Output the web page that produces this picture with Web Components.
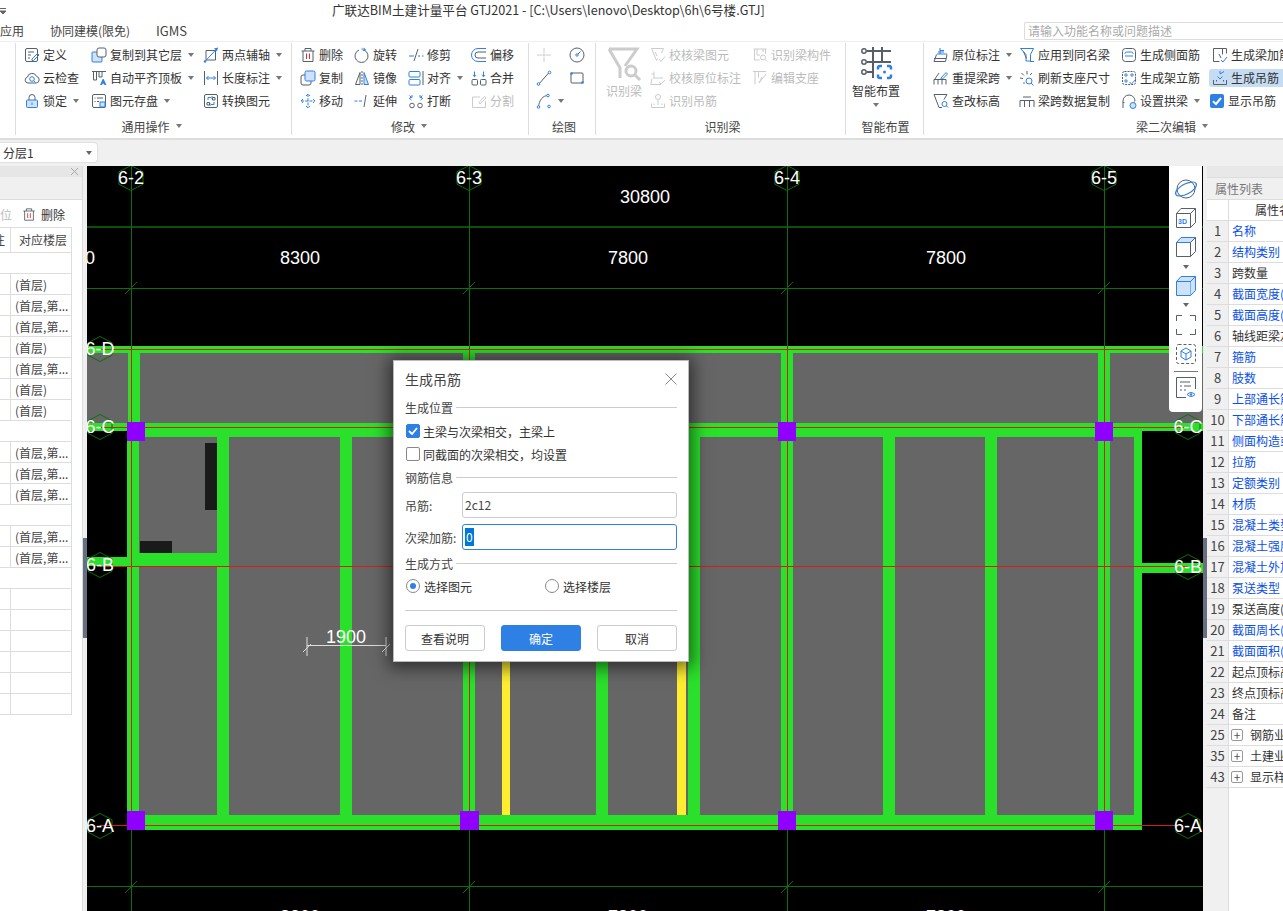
<!DOCTYPE html>
<html lang="zh">
<head>
<meta charset="utf-8">
<title>GTJ2021</title>
<style>
  html, body { margin: 0; height: 100%; overflow: hidden; background: #fff; }
  body { font: 12px "Noto Sans CJK SC", "Liberation Sans", sans-serif; color: #333; }
  .row { display: flex; }
  .col { display: flex; flex-direction: column; }
</style>
</head>
<body>
<gtj-app>
  <gtj-titlebar slot="top">广联达BIM土建计量平台 GTJ2021 - [C:\Users\lenovo\Desktop\6h\6号楼.GTJ]</gtj-titlebar>
  <gtj-tabs slot="top"></gtj-tabs>
  <gtj-ribbon slot="top">
    <rb-group style="width:16px"></rb-group>
    <rb-group label="通用操作" arrow style="width:276px;--pad:8px;--lp:0px;--rp:4px">
      <div class="col" style="width:67px">
        <rb-item icon="define">定义</rb-item><rb-item icon="cloud">云检查</rb-item><rb-item icon="lock" arrow>锁定</rb-item>
      </div>
      <div class="col" style="width:112px">
        <rb-item icon="copyfloor" arrow>复制到其它层</rb-item><rb-item icon="flush" arrow>自动平齐顶板</rb-item><rb-item icon="save" arrow>图元存盘</rb-item>
      </div>
      <div class="col">
        <rb-item icon="axis" arrow>两点辅轴</rb-item><rb-item icon="dim" arrow>长度标注</rb-item><rb-item icon="convert">转换图元</rb-item>
      </div>
    </rb-group>
    <rb-group label="修改" arrow style="width:237px;--pad:8px;--rp:2px">
      <div class="col" style="width:54px">
        <rb-item icon="trash">删除</rb-item><rb-item icon="copy">复制</rb-item><rb-item icon="move">移动</rb-item>
      </div>
      <div class="col" style="width:54px">
        <rb-item icon="rotate">旋转</rb-item><rb-item icon="mirror">镜像</rb-item><rb-item icon="extend">延伸</rb-item>
      </div>
      <div class="col" style="width:63px">
        <rb-item icon="trim">修剪</rb-item><rb-item icon="align" arrow>对齐</rb-item><rb-item icon="break">打断</rb-item>
      </div>
      <div class="col">
        <rb-item icon="offset">偏移</rb-item><rb-item icon="merge">合并</rb-item><rb-item icon="split" disabled>分割</rb-item>
      </div>
    </rb-group>
    <rb-group label="绘图" style="width:67px;--pad:7px;--lp:4px">
      <div class="col" style="width:33px">
        <rb-item icon="point" disabled></rb-item><rb-item icon="line"></rb-item><rb-item icon="arc" arrow></rb-item>
      </div>
      <div class="col">
        <rb-item icon="circle"></rb-item><rb-item icon="rect"></rb-item>
      </div>
    </rb-group>
    <rb-group label="识别梁" style="width:250px;--pad:10px;--lp:4px">
      <div class="col" style="width:44px"><rb-big icon="recog" disabled>识别梁</rb-big></div>
      <div class="col" style="width:102px">
        <rb-item icon="chkbeam" disabled>校核梁图元</rb-item><rb-item icon="chkmark" disabled>校核原位标注</rb-item><rb-item icon="hanger" disabled>识别吊筋</rb-item>
      </div>
      <div class="col">
        <rb-item icon="beamdef" disabled>识别梁构件</rb-item><rb-item icon="support" disabled>编辑支座</rb-item>
      </div>
    </rb-group>
    <rb-group label="智能布置" style="width:78px;--pad:7px;--lp:2px">
      <rb-big icon="smart" arrow>智能布置</rb-big>
    </rb-group>
    <rb-group label="梁二次编辑" arrow style="width:500px;--pad:9px;--rp:3px">
      <div class="col" style="width:86px">
        <rb-item icon="inplace" arrow>原位标注</rb-item><rb-item icon="respan" arrow>重提梁跨</rb-item><rb-item icon="elev">查改标高</rb-item>
      </div>
      <div class="col" style="width:102px">
        <rb-item icon="applysame">应用到同名梁</rb-item><rb-item icon="refresh">刷新支座尺寸</rb-item><rb-item icon="spancopy">梁跨数据复制</rb-item>
      </div>
      <div class="col" style="width:91px">
        <rb-item icon="side">生成侧面筋</rb-item><rb-item icon="erect">生成架立筋</rb-item><rb-item icon="arch" arrow>设置拱梁</rb-item>
      </div>
      <div class="col">
        <rb-item icon="addbar">生成梁加筋</rb-item><rb-item icon="hangblue" active>生成吊筋</rb-item><rb-item icon="check" style="margin-left:-3px">显示吊筋</rb-item>
      </div>
    </rb-group>
  </gtj-ribbon>
  <gtj-subbar slot="top">分层1</gtj-subbar>
  <gtj-floorpanel slot="left"></gtj-floorpanel>
  <gtj-canvas slot="center"><gtj-viewbar></gtj-viewbar></gtj-canvas>
  <gtj-props slot="right"></gtj-props>
  <gtj-dialog slot="over" heading="生成吊筋"></gtj-dialog>
</gtj-app>

<script>
const ICONS = {
  define: '<rect class="g" x="1.5" y="1.5" width="12" height="13" rx="1.5"/><path class="g" d="M4 5h6M4 8h3M4 11h2"/><path class="b" d="M8 12l5.5-5.5 1.5 1.5-5.5 5.5H8z"/>',
  cloud: '<path class="g" d="M4 13a3 3 0 0 1-.6-5.9A4.8 4.8 0 0 1 12.6 6.5 3.3 3.3 0 0 1 12.2 13z"/><circle class="b" cx="8" cy="9" r="2.3"/><path class="b" d="M9.7 10.7l1.6 1.6"/>',
  lock: '<path class="g" d="M5 7V4.5a3 3 0 0 1 6 0V7"/><rect class="f" x="2.5" y="7" width="11" height="7.5" rx="1"/><path class="b" d="M8 9.5v2.5"/>',
  copyfloor: '<rect class="f" x="1" y="5" width="10" height="10" rx="1"/><rect class="w" x="6" y="1" width="9" height="9" rx="2"/>',
  flush: '<path class="g" d="M1 1.5h14M2.5 1.5V10h3V1.5M8 1.5V7h3V1.5"/><path class="fb" d="M9 15l2.7-6h1l2.7 6h-2l-.4-1.2h-1.6l-.4 1.2z"/>',
  save: '<rect class="g" x="1.5" y="1.5" width="13" height="13" rx="1.5"/><path class="g" d="M6 5h6M3.5 5h1M3.5 8.500h1M6 8.500h2"/><rect class="f" x="9" y="9" width="5" height="5"/>',
  axis: '<path class="g" d="M3 3.500h9.500V13H3z"/><path class="b" d="M1.500 15L14 1.500"/><path class="fb" d="M11 1.500l4-1-1 4z"/><circle class="fb" cx="2" cy="14.500" r="1.200"/>',
  dim: '<path class="g" d="M1.500 1v14M14.500 1v14"/><path class="b" d="M3.500 8h9M5.500 6l-2 2 2 2M10.500 6l2 2-2 2"/>',
  convert: '<rect class="g" x="1.500" y="1.500" width="13" height="13" rx="1.500"/><path class="b" d="M8 4.500h-3v2.500M8 4.500l1.500-1.500M8 4.500l1.500 1.500M8 11.500h3V9M8 11.500l-1.500-1.500M8 11.500l-1.500 1.500"/><path class="g" d="M4 9.500h2.500V12H4zM9.500 4.500H12V7H9.500z"/>',
  trash: '<path class="g" d="M1.500 4h13M5 4V1.500h6V4M3 4v10.500h10V4"/><path class="r" d="M6.500 6.500v5.500M9.500 6.500v5.500"/>',
  copy: '<rect class="w" x="1" y="5" width="10" height="10" rx="2"/><rect class="f" x="5" y="1" width="10" height="10" rx="1.500"/>',
  move: '<path class="b" d="M8 1v14M1 8h14M6 3l2-2 2 2M6 13l2 2 2-2M3 6L1 8l2 2M13 6l2 2-2 2" stroke-dasharray="3 1.200"/>',
  rotate: '<path class="g" d="M5 3a6.500 6.500 0 1 0 5 0" /><path class="b" d="M7.500 2a5 5 0 0 1 3.500 1M9.500 .8l2 2-2.500 1"/>',
  mirror: '<path class="g" d="M1.500 14.500L6 2.500V14.500z"/><path class="f" d="M14.500 14.500L10 2.500V14.500z"/><path class="g" d="M8 1v14" stroke-dasharray="2 1"/>',
  extend: '<path class="b" d="M.5 8h8" stroke-dasharray="3 1.500"/><path class="g" d="M12 2L10 14"/>',
  trim: '<path class="b" d="M1 9h5M10 9h2M14 9h1.500"/><path class="g" d="M10 2L6 14"/>',
  align: '<rect class="b" x="1" y="1.500" width="11" height="5.500" rx="1"/><rect class="b" x="1" y="9.500" width="11" height="5.500" rx="1"/><path class="g" d="M15 1v14"/>',
  break: '<circle class="g" cx="4" cy="12.500" r="2.300"/><circle class="g" cx="12" cy="12.500" r="2.300"/><path class="b" d="M1 5l2.500 2M1.500 2.500l2 2M4 2v2.500h-2M15 5l-2.500 2M14.500 2.500l-2 2M12 2v2.500h2"/>',
  offset: '<path class="b" d="M15 1.500H7a6.500 6.500 0 0 0 0 13h8"/><path class="g" d="M15 5H7a3 3 0 0 0 0 6h8"/>',
  merge: '<rect class="g" x="1" y="9.500" width="5.500" height="5.500" rx="1"/><rect class="g" x="9.500" y="9.500" width="5.500" height="5.500" rx="1"/><path class="b" d="M3.500 1.500v5M1.800 5l1.700 1.700L5.200 5M12.500 1.500v5M10.800 5l1.700 1.700L14.200 5"/>',
  split: '<path class="g" d="M9 4H1.500v10.500h13V8M9 11l6-6-1.500-1.500-5.500 6z"/>',
  point: '<path class="g" d="M8 1v5M8 10v5M1 8h5M10 8h5"/><circle class="g" cx="8" cy="8" r="1"/>',
  line: '<path class="g" d="M2.500 14.500L13.500 2"/><circle class="wb" cx="2.500" cy="14" r="1.300"/><circle class="wb" cx="13.500" cy="2.500" r="1.300"/>',
  arc: '<path class="g" d="M2.500 14C3 7 7 2.500 12 2.500"/><circle class="wb" cx="2.500" cy="14" r="1.300"/><circle class="wb" cx="12" cy="2.500" r="1.300"/><circle class="wb" cx="13" cy="13.500" r="1.300"/>',
  circle: '<circle class="g" cx="8" cy="8" r="7"/><path class="g" d="M8 8l3.500-3.500"/><circle class="wb" cx="8" cy="8" r="1.200"/>',
  rect: '<rect class="g" x="2" y="3" width="12" height="10" rx="1"/><circle class="fb" cx="2.500" cy="3.500" r="1.300"/><circle class="fb" cx="13.500" cy="12.500" r="1.300"/>',
  chkbeam: '<path class="g" d="M1.500 1.500h12l-2 4.500M1.500 1.500l5 12 1-2M5 5l2 4"/><path class="g" d="M9 12l2 2.500 4-5"/>',
  chkmark: '<path class="g" d="M4 8V1.500M1.500 4H4M3 8h10M2 8.500L.8 14.500H11"/><path class="g" d="M9 12l2 2 4-4"/>',
  hanger: '<circle class="g" cx="8" cy="4" r="2.500"/><path class="g" d="M8 6.500V12M1.500 10.500v4h13v-4M4 10.500V12M12 10.500V12"/>',
  beamdef: '<path class="g" d="M1.500 2h13M2.500 2v11h5M13.500 2v5M5 2v6h3M11 2v3"/><circle class="g" cx="11" cy="10.500" r="2.500"/><path class="g" d="M13 12.500l2 2"/>',
  support: '<path class="g" d="M1 1.500h13M3 1.500v13M6.500 1.500v6M10 7l-3 6 7-9"/>',
  inplace: '<path class="b" d="M7 7V1M7 3.500h4M4 7h10M5 5l6 0"/><path class="g" d="M3.500 7.500L1 14.500h11.500l1.500-7M1 11.500h12"/>',
  respan: '<path class="b" d="M8 8l5-5.500 1.500 1.500L9.500 9H8z"/><path class="g" d="M1 14.500V9.500h12v5M5 9.500v5M9 9.500v5M1.500 9.500L6 3"/>',
  elev: '<path class="g" d="M1 1.500h13l-3 5M1 1.500l5 13h3"/><circle class="b" cx="11.500" cy="11" r="2.500"/><path class="b" d="M13.300 12.800l1.700 1.700"/>',
  applysame: '<path class="b" d="M1.500 1.500h13l-3 6v6.500H7V7.500z"/><path class="g" d="M4.500 4.500l3 7"/><path class="b" d="M11 14.500h4"/>',
  refresh: '<path class="g" d="M1 8l3 .5M2.500 3l2.500 2.500M8 1v3.500M13 3l-2 2"/><circle class="b" cx="10" cy="11" r="3"/><path class="b" d="M12.200 13.200l2.300 2M4 13h2"/>',
  spancopy: '<path class="g" d="M1 14V7.500h14V14M5.500 7.500V14M10.500 7.500V14M4 4h8"/>',
  side: '<rect class="g" x="1.500" y="1.500" width="13" height="13" rx="3"/><path class="b" d="M4 7V6.500Q4 5 5.500 5h5Q12 5 12 6.500V7M4 9h8"/>',
  erect: '<rect class="g" x="1.500" y="1.500" width="13" height="13" rx="2" stroke-dasharray="2 1"/><circle class="wb" cx="5" cy="5" r="1.200"/><circle class="wb" cx="11" cy="5" r="1.200"/><circle class="wb" cx="5" cy="11" r="1.200"/><path class="b" d="M8.500 12l2 2 4.500-5"/>',
  arch: '<path class="g" d="M2 15V8a6 6 0 0 1 12 0M2 9.500h1.500M14 9h-1"/><circle class="f" cx="12" cy="12.500" r="3"/>',
  addbar: '<path class="g" d="M1.500 1.500h13v5M1.500 1.500v13h6M10.500 1.500v6M7 7l2 4"/><path class="b" d="M9 13l2 2 4-5"/>',
  hangblue: '<path class="b" d="M8 1v3M5.500 6.500L8 9l2.500-2.500"/><path class="g" d="M1.500 10v4.500h13V10M4.500 10v1.500M11.500 10v1.500"/><path class="b" d="M8 4l4-2.500"/>',
  check: '<rect x="1" y="1" width="14" height="14" rx="2" fill="#2f80e4"/><path d="M4 8.200l3 2.800 5-6" fill="none" stroke="#fff" stroke-width="2"/>',
  recog: '<path class="g" stroke-width="3" d="M2 3h28L18 20M2 3l11 19v10"/><circle class="g" stroke-width="3" cx="24" cy="25" r="5"/><path class="g" stroke-width="3" d="M28 29l5 5"/>',
  smart: '<path class="g" stroke-width="2" d="M14 1v31M23 1v15M8 5h24M8 16h24M8 26h6"/><circle class="w" stroke-width="1.500" cx="5" cy="5" r="2.200"/><circle class="w" stroke-width="1.500" cx="5" cy="16" r="2.200"/><circle class="w" stroke-width="1.500" cx="5" cy="26" r="2.200"/><path class="b" stroke-width="2.500" d="M23 20h-2a2 2 0 0 0-2 2v1.500M28 20h2a2 2 0 0 1 2 2v1.500M23 32h-2a2 2 0 0 1-2-2v-1.500M28 32h2a2 2 0 0 0 2-2v-1.500"/><circle class="fb" cx="25.500" cy="26" r="1.500"/>'
};
const ICON_CSS = `
  svg { display: block; overflow: visible; }
  .g { fill: none; stroke: #56606b; }
  .b { fill: none; stroke: #2f80e4; }
  .r { fill: none; stroke: #e02b2b; }
  .w { fill: #fff; stroke: #56606b; }
  .f { fill: #cfe2fb; stroke: #2f80e4; }
  .fb { fill: #2f80e4; stroke: none; }
  .wb { fill: #fff; stroke: #2f80e4; }
`;

class GtjApp extends HTMLElement {
  constructor() {
    super();
    this.attachShadow({mode: 'open'}).innerHTML = `
      <style>
        :host { display: flex; flex-direction: column; width: 1283px; height: 911px; overflow: hidden; position: relative; }
        .main { display: flex; height: 745px; background: #f0f0f0; }
        .gutter { width: 4px; padding-top: 372px; flex: none; }
        .gutter i { display: block; height: 100px; background: #667080; }
        .over { position: absolute; left: 393px; top: 360px; }
      </style>
      <slot name="top"></slot>
      <div class="main">
        <slot name="left"></slot>
        <div class="gutter"><i></i></div>
        <slot name="center"></slot>
        <div class="gutter"><i></i></div>
        <slot name="right"></slot>
      </div>
      <div class="over"><slot name="over"></slot></div>`;
  }
}

class GtjTitlebar extends HTMLElement {
  constructor() {
    super();
    this.attachShadow({mode: 'open'}).innerHTML = `
      <style>
        :host { display: flex; height: 21px; box-sizing: border-box; padding: 0 0 2px 332px; align-items: center; font-size: 12.6px; color: #333; background: #fff; position: relative; white-space: nowrap; }
        svg { position: absolute; left: 0; top: 8px; }
      </style>
      <svg width="6" height="7"><path d="M0 .5h6M0 3h6L3 6z" stroke="#666" fill="#666"/></svg>
      <slot></slot>`;
  }
}

class GtjTabs extends HTMLElement {
  constructor() {
    super();
    this.attachShadow({mode: 'open'}).innerHTML = `
      <style>
        :host { display: flex; height: 20px; box-sizing: border-box; padding-bottom: 1px; align-items: center; background: #fff; font-size: 12px; color: #444; }
        span { flex: none; white-space: nowrap; }
        .search { margin-left: auto; width: 259px; height: 18px; margin-bottom: -1px; border: 1px solid #ddd; border-right: 0; border-radius: 2px 0 0 2px; color: #aaa; padding-left: 3px; line-height: 16px; box-sizing: border-box; }
      </style>
      <span style="width:50px">应用</span>
      <span style="width:106px">协同建模(限免)</span>
      <span style="font-size:13px">IGMS</span>
      <span class="search">请输入功能名称或问题描述</span>`;
  }
}

class GtjRibbon extends HTMLElement {
  constructor() {
    super();
    this.attachShadow({mode: 'open'}).innerHTML = `
      <style>
        :host { display: flex; height: 99px; box-sizing: border-box; border-top: 1px solid #eee; border-bottom: 2px solid #ddd; background: #fff; overflow: hidden; }
      </style>
      <slot></slot>`;
  }
}

class RbGroup extends HTMLElement {
  constructor() {
    super();
    this.attachShadow({mode: 'open'});
  }
  connectedCallback() {
    const label = this.getAttribute('label') || '';
    const arrow = this.hasAttribute('arrow') ? '<i></i>' : '';
    this.shadowRoot.innerHTML = `
      <style>
        :host { display: flex; flex-direction: column; flex: none; box-sizing: border-box; height: 92px; margin-top: 1px; border-right: 1px solid #ddd; }
        .body { display: flex; flex: none; height: 72px; padding-left: var(--pad, 0); }
        .label { display: flex; flex: none; justify-content: center; align-items: center; height: 22px; gap: 6px; padding: 0 var(--rp, 0) 0 var(--lp, 0); color: #444; white-space: nowrap; }
        i { width: 0; height: 0; border: 3px solid transparent; border-top: 4px solid #777; border-bottom: 0; }
      </style>
      <div class="body"><slot></slot></div>
      ${label ? `<div class="label">${label}${arrow}</div>` : ''}`;
  }
}

class RbItem extends HTMLElement {
  constructor() {
    super();
    this.attachShadow({mode: 'open'});
  }
  connectedCallback() {
    const arrow = this.hasAttribute('arrow') ? '<i></i>' : '';
    this.shadowRoot.innerHTML = `
      <style>
        :host { display: flex; height: 23px; align-items: center; color: #333; white-space: nowrap; }
        :host([disabled]) { color: #bbb; }
        :host([disabled]) svg * { stroke: #ccc; }
        :host([active]) .in { background: #c5dcf3; padding-right: 60px; }
        .in { display: flex; align-items: center; gap: 3px; height: 18px; margin-left: -3px; padding: 0 3px; border-radius: 3px; flex: none; }
        i { width: 0; height: 0; border: 3px solid transparent; border-top: 4px solid #777; border-bottom: 0; margin-left: 3px; }
        ${ICON_CSS}
      </style>
      <div class="in">
        <svg width="16" height="16" viewBox="0 0 16 16">${ICONS[this.getAttribute('icon')]}</svg>
        <slot></slot>${arrow}
      </div>`;
  }
}

class RbBig extends HTMLElement {
  constructor() {
    super();
    this.attachShadow({mode: 'open'});
  }
  connectedCallback() {
    const arrow = this.hasAttribute('arrow') ? '<i></i>' : '';
    this.shadowRoot.innerHTML = `
      <style>
        :host { display: flex; flex-direction: column; align-items: center; width: 48px; margin-left: -1px; white-space: nowrap; color: #333; }
        :host([disabled]) { color: #bbb; width: 36px; margin-left: 0; }
        :host([disabled]) svg * { stroke: #ccc; }
        svg { margin-top: 3px; }
        span { margin-top: 2px; line-height: 18px; }
        i { width: 0; height: 0; border: 3px solid transparent; border-top: 4px solid #777; border-bottom: 0; margin-top: 3px; }
        ${ICON_CSS}
      </style>
      <svg width="34" height="34" viewBox="0 0 34 34">${ICONS[this.getAttribute('icon')]}</svg>
      <span><slot></slot></span>${arrow}`;
  }
}

class GtjSubbar extends HTMLElement {
  constructor() {
    super();
    this.attachShadow({mode: 'open'}).innerHTML = `
      <style>
        :host { display: block; height: 26px; box-sizing: border-box; padding-top: 2px; background: #f0f0f0; }
        .sel { display: flex; align-items: center; justify-content: space-between; width: 98px; height: 21px; box-sizing: border-box; padding: 0 5px 0 3px; background: #fff; border: 1px solid #e0e0e0; border-left: 0; border-radius: 0 4px 4px 0; color: #333; }
        i { width: 0; height: 0; border: 3px solid transparent; border-top: 4px solid #666; border-bottom: 0; }
      </style>
      <div class="sel"><span><slot></slot></span><i></i></div>`;
  }
}

class GtjFloorpanel extends HTMLElement {
  constructor() {
    super();
    this.attachShadow({mode: 'open'});
  }
  connectedCallback() {
    const A = '(首层)', B = '(首层,第...';
    const rows = [null, A, B, B, A, B, A, A, null, B, B, B, null, B, B, null, '', '', '', '', '', ''];
    const cells = rows.map(r => r === null
      ? '<div class="tr"><div class="wide"></div></div>'
      : `<div class="tr"><div class="a"></div><div class="b">${r}</div></div>`).join('');
    this.shadowRoot.innerHTML = `
      <style>
        :host { display: flex; flex-direction: column; width: 83px; flex: none; box-sizing: border-box; background: #fff; border-right: 1px solid #ddd; overflow: hidden; }
        .head { display: flex; justify-content: flex-end; align-items: center; height: 11px; padding-right: 3px; background: #e6e6e6; color: #aaa; }
        .sub { height: 23px; background: #f0f0f0; border-bottom: 1px solid #ddd; box-sizing: border-box; }
        .tools { display: flex; align-items: center; height: 28px; padding-top: 2px; border-bottom: 1px solid #ddd; box-sizing: border-box; white-space: nowrap; width: 72px; }
        .tools .off { width: 22px; color: #bbb; flex: none; }
        .tools b { font-weight: normal; margin-left: 5px; color: #333; }
        .tr { display: flex; height: 21px; width: 72px; box-sizing: border-box; border-bottom: 1px solid #ddd; border-right: 1px solid #ddd; line-height: 22px; color: #444; white-space: nowrap; }
        .th { height: 25px; line-height: 24px; }
        .a { width: 11px; box-sizing: border-box; border-right: 1px solid #ddd; flex: none; overflow: hidden; display: flex; justify-content: flex-end; padding-right: 5px; }
        .a span { flex: none; }
        .b { padding-left: 4px; }
        .th .b { padding-left: 8px; }
        .wide { flex: 1; }
        ${ICON_CSS}
      </style>
      <div class="head"><svg width="9" height="9"><path d="M1 1l7 7M8 1L1 8" stroke="#aaa" fill="none"/></svg></div>
      <div class="sub"></div>
      <div class="tools">
        <span class="off">位</span>
        <svg width="14" height="15" viewBox="0 0 16 16">${ICONS.trash}</svg>
        <b>删除</b>
      </div>
      <div class="tr th"><div class="a"><span>注</span></div><div class="b">对应楼层</div></div>
      ${cells}`;
  }
}

class GtjCanvas extends HTMLElement {
  constructor() {
    super();
    this.attachShadow({mode: 'open'});
  }
  getDrawing() {
    const rect = (x, y, w, h, c) => `<rect x="${x}" y="${y}" width="${w}" height="${h}" fill="${c}"/>`;
    const GREEN = '#2be02b', PURPLE = '#8f00ff', GRID = '#0a700a', RED = '#d02010';
    const axes = [131, 469, 787, 1104];
    const lower = [[127, 12], [217, 12], [340, 12], [463, 12], [596, 12], [688, 12], [781, 12], [883, 12], [985, 12], [1098, 12], [1134, 8]];
    const upper = [[128, 12], [463, 12], [781, 12], [1098, 12]];
    const tick = (x, y) => `<path d="M${x - 6} ${y + 6}L${x + 6} ${y - 6}" stroke="${GRID}"/>`;
    const hex = (x, y) => {
      const r = 12.5, w = 12;
      return `<path d="M${x} ${y - r}L${x + w} ${y - r / 2}V${y + r / 2}L${x} ${y + r}L${x - w} ${y + r / 2}V${y - r / 2}Z" fill="none" stroke="${GRID}"/>`;
    };
    const label = (x, y, t, size = 18) => `<text x="${x}" y="${y}" font-size="${size}" text-anchor="middle" fill="#fff">${t}</text>`;
    const bubble = (x, y, t) => hex(x, y) + label(x, y + 6, t);
    return `
      ${rect(87, 166, 1116, 745, '#000')}
      ${rect(87, 353, 1116, 70, '#666')}
      ${rect(139, 431, 995, 384, '#666')}
      ${rect(87, 346, 1116, 7, GREEN)}
      ${rect(87, 423, 41, 8, GREEN)}
      ${rect(1142, 423, 61, 8, GREEN)}
      ${rect(127, 423, 1015, 14, GREEN)}
      ${upper.map(([x, w]) => rect(x, 353, w, 70, GREEN)).join('')}
      ${lower.map(([x, w]) => rect(x, 431, w, 384, GREEN)).join('')}
      ${rect(127, 815, 1015, 15, GREEN)}
      ${rect(87, 557, 43, 9, GREEN)}
      ${rect(127, 553, 102, 13, GREEN)}
      ${rect(1142, 563, 61, 10, GREEN)}
      ${rect(205, 443, 12, 67, '#1a1a1a')}
      ${rect(140, 541, 32, 12, '#1a1a1a')}
      ${rect(502, 437, 8, 378, '#ffee30')}
      ${rect(677, 437, 9, 378, '#ffee30')}
      <g stroke="${GRID}" fill="none">
        <path d="M87 227H1203" stroke="#0a500a" stroke-width="2"/>
        <path d="M87 288.500H1203M87 886.500H1203"/>
        ${axes.map(x => `<path d="M${x + .5} 166V349M${x + .5} 830V911"/>`).join('')}
      </g>
      ${axes.map(x => tick(x, 288) + tick(x, 887)).join('')}
      <g stroke="${RED}" fill="none">
        <path d="M100 349.500H1188M100 427.500H1188M100 566.500H1188M100 825.500H1175"/>
        ${axes.map(x => `<path d="M${x + .5} 349V826"/>`).join('')}
      </g>
      ${[127, 460, 778, 1095].map(x => rect(x, 811, x === 460 ? 19 : 18, 19, PURPLE)).join('')}
      ${[127, 778, 1095].map(x => rect(x, 422, 18, 19, PURPLE)).join('')}
      ${bubble(131, 178, '6-2')}${bubble(469, 178, '6-3')}${bubble(787, 178, '6-4')}${bubble(1104, 178, '6-5')}
      ${bubble(100, 349, '6-D')}${bubble(100, 427, '6-C')}${bubble(100, 565, '6-B')}${bubble(100, 826, '6-A')}
      ${bubble(1188, 427, '6-C')}${bubble(1188, 567, '6-B')}${bubble(1188, 826, '6-A')}
      ${label(645, 203, '30800')}
      ${label(90, 264, '0')}${label(300, 264, '8300')}${label(628, 264, '7800')}${label(946, 264, '7800')}
      ${label(300, 923, '8300')}${label(628, 923, '7800')}${label(946, 923, '7800')}
      <path d="M307 645.500H386M307 637V656M386 637V656M303 652l8-8M382 652l8-8" stroke="#ddd" fill="none"/>
      ${label(346, 643, '1900')}`;
  }
  connectedCallback() {
    this.shadowRoot.innerHTML = `
      <style>
        :host { display: block; position: relative; width: 1116px; height: 745px; flex: none; background: #000; overflow: hidden; }
        svg { display: block; font-family: "Liberation Sans", sans-serif; }
        ::slotted(*) { position: absolute; right: 1px; top: 0; }
      </style>
      <svg width="1116" height="745" viewBox="87 166 1116 745">${this.getDrawing()}</svg>
      <slot></slot>`;
  }
}

class GtjViewbar extends HTMLElement {
  constructor() {
    super();
    this.attachShadow({mode: 'open'}).innerHTML = `
      <style>
        :host { display: flex; flex-direction: column; align-items: center; width: 33px; height: 246px; box-sizing: border-box; padding-top: 12px; background: #fff; border-radius: 0 0 4px 4px; }
        svg { display: block; flex: none; }
        i { width: 0; height: 0; border: 3px solid transparent; border-top: 4px solid #666; border-bottom: 0; margin: 7px 0 6px; }
        .sep { width: 24px; height: 1px; background: #777; margin: 7px 0 5px; }
        svg text { font: bold 7px "Liberation Sans", sans-serif; fill: #2f80e4; }
      </style>
      <svg width="24" height="22" viewBox="0 0 24 22"><circle cx="12" cy="11" r="9" fill="none" stroke="#56606b"/><ellipse cx="12" cy="11" rx="11.500" ry="5" transform="rotate(-28 12 11)" fill="none" stroke="#2f80e4" stroke-width="1.200"/></svg>
      <svg style="margin-top:7px" width="22" height="22" viewBox="0 0 22 22"><path d="M1.500 6.500h14v14h-14zM1.500 6.500L6 1.500h14.500v14L15.500 20.500M15.500 6.500l5-5" fill="#fff" stroke="#56606b"/><text x="3" y="17">3D</text></svg>
      <svg style="margin-top:7px" width="22" height="22" viewBox="0 0 22 22"><path d="M1.500 6.500h14v14h-14z" fill="none" stroke="#56606b"/><path d="M1.500 6.500L6 1.500h14.500l-5 5z" fill="#cfe2fb" stroke="#2f80e4"/><path d="M15.500 6.500l5-5v14l-5 5" fill="none" stroke="#56606b"/></svg>
      <i></i>
      <svg width="22" height="22" viewBox="0 0 22 22"><path d="M1.500 6.500h14v14h-14z" fill="#cfe2fb" stroke="#2f80e4"/><path d="M1.500 6.500L6 1.500h14.500l-5 5zM15.500 6.500l5-5v14l-5 5" fill="#cfe2fb" stroke="#2f80e4"/></svg>
      <i style="margin:6px 0 8px"></i>
      <svg width="20" height="20" viewBox="0 0 20 20" fill="none" stroke="#56606b"><path d="M.5 6V.5H6M14 .5h5.500V6M.5 14v5.500H6M14 19.500h5.500V14"/></svg>
      <svg style="margin-top:9px" width="20" height="20" viewBox="0 0 20 20" fill="none"><rect x=".5" y=".5" width="19" height="19" rx="2" stroke="#56606b" stroke-dasharray="3 2"/><path d="M10 4l5 3v6l-5 3-5-3V7zM5 7l5 3 5-3M10 10v6" stroke="#2f80e4"/></svg>
      <div class="sep"></div>
      <svg width="20" height="22" viewBox="0 0 20 22" fill="none"><path d="M10 20.500H.5V.5h19V12" stroke="#56606b"/><path d="M4 5h10M4 9h2M8 9h7M4 13h2M8 13h2" stroke="#56606b"/><path d="M11 17.500q4-4 8 0q-4 4-8 0z" stroke="#2f80e4"/><circle cx="15" cy="17.500" r="1.200" fill="#2f80e4"/></svg>`;
  }
}

class GtjProps extends HTMLElement {
  constructor() {
    super();
    this.attachShadow({mode: 'open'});
  }
  connectedCallback() {
    const rows = [
      [1, '名称', 1], [2, '结构类别', 1], [3, '跨数量', 0], [4, '截面宽度(', 1], [5, '截面高度(', 1], [6, '轴线距梁左', 0],
      [7, '箍筋', 1], [8, '肢数', 1], [9, '上部通长筋', 1], [10, '下部通长筋', 1], [11, '侧面构造或', 1], [12, '拉筋', 1],
      [13, '定额类别', 1], [14, '材质', 1], [15, '混凝土类型', 1], [16, '混凝土强度', 1], [17, '混凝土外加', 1], [18, '泵送类型', 1],
      [19, '泵送高度(', 0], [20, '截面周长(', 1], [21, '截面面积(', 1], [22, '起点顶标高', 0], [23, '终点顶标高', 0], [24, '备注', 0],
      [25, '钢筋业务', 2], [35, '土建业务', 2], [43, '显示样式', 2]
    ];
    const html = rows.map(([n, t, k]) => `
      <div class="tr"><div class="n">${n}</div><div class="t ${k === 1 ? 'blue' : ''}">${k === 2 ? '<i>+</i>' : ''}${t}</div></div>`).join('');
    this.shadowRoot.innerHTML = `
      <style>
        :host { display: flex; flex-direction: column; flex: 1; min-width: 0; background: #fff; overflow: hidden; white-space: nowrap; font-size: 12px; color: #333; }
        .top { height: 11px; flex: none; background: #e8e8e8; border-bottom: 1px solid #ddd; }
        .title { height: 22px; flex: none; line-height: 21px; padding-left: 8px; background: #f0f0f0; color: #777; border-bottom: 1px solid #ddd; box-sizing: border-box; }
        .tr { display: flex; flex: none; height: 21px; box-sizing: border-box; border-bottom: 1px solid #ddd; line-height: 20px; }
        .n { width: 22px; flex: none; box-sizing: border-box; background: #f0f0f0; border-right: 1px solid #ddd; text-align: center; color: #444; font-size: 13px; }
        .t { padding-left: 3px; flex: 1; overflow: hidden; display: flex; align-items: center; }
        .blue { color: #0a50e6; }
        .head { justify-content: center; padding-left: 34px; }
        i { font-style: normal; display: flex; width: 12px; height: 12px; align-items: center; justify-content: center; box-sizing: border-box; border: 1px solid #999; border-radius: 2px; margin: 0 7px 0 -1px; line-height: 1; color: #555; flex: none; }
        .rest { width: 22px; flex: 1; background: #f0f0f0; border-right: 1px solid #ddd; box-sizing: border-box; }
      </style>
      <div class="top"></div>
      <div class="title">属性列表</div>
      <div class="tr"><div class="n" style="background:#fff"></div><div class="t head">属性名</div></div>
      ${html}
      <div class="rest"></div>`;
  }
}

class DlgSection extends HTMLElement {
  constructor() {
    super();
    this.attachShadow({mode: 'open'}).innerHTML = `
      <style>
        :host { display: flex; flex: none; align-items: center; height: 18px; color: #444; white-space: nowrap; }
        div { flex: 1; height: 1px; background: #ccc; margin-left: 3px; }
      </style>
      <slot></slot><div></div>`;
  }
}

class GtjDialog extends HTMLElement {
  constructor() {
    super();
    this.attachShadow({mode: 'open'});
  }
  getStyles() {
    return `
      <style>
        :host { display: flex; flex-direction: column; width: 296px; height: 302px; box-sizing: border-box; padding: 0 11px; background: #fff; border: 1px solid #bbb; box-shadow: 0 2px 16px 4px rgba(0,0,0,.55); color: #333; white-space: nowrap; }
        .title { display: flex; flex: none; justify-content: space-between; align-items: center; height: 37px; box-sizing: border-box; font-size: 14px; color: #444; }
        .title span { margin-top: -2px; }
        .title svg { margin-top: -1px; }
        .opt { display: flex; flex: none; align-items: center; gap: 3px; height: 22px; margin-left: 1px; }
        .box { width: 14px; height: 14px; box-sizing: border-box; border: 1px solid #888; border-radius: 2px; flex: none; }
        .box.on { background: #2f80e4; border-color: #2f80e4; display: flex; align-items: center; justify-content: center; }
        .field { display: flex; flex: none; align-items: center; height: 26px; margin-top: 6px; color: #444; }
        .field span { width: 57px; flex: none; }
        .input { flex: 1; height: 26px; box-sizing: border-box; border: 1px solid #ccc; border-radius: 3px; padding-left: 2px; line-height: 24px; color: #444; }
        .input.focus { border-color: #2f80e4; }
        .input.focus b { font-weight: normal; background: #0078d7; color: #fff; display: inline-block; line-height: 18px; padding: 0 1px; }
        .radios { display: flex; flex: none; height: 22px; margin-top: 3px; }
        .radios .opt { width: 139px; flex: none; gap: 4px; margin: 0 0 0 1px; }
        .radios .opt + .opt { margin-left: 0; }
        .radio { width: 14px; height: 14px; box-sizing: border-box; border: 1px solid #888; border-radius: 50%; flex: none; display: flex; align-items: center; justify-content: center; }
        .radio.on::after { content: ""; width: 6px; height: 6px; border-radius: 50%; background: #2f80e4; }
        hr { border: 0; height: 1px; flex: none; background: #ccc; margin: 13px 0 0; width: 100%; }
        .btns { display: flex; flex: none; justify-content: space-between; margin-top: 14px; }
        button { width: 80px; height: 26px; padding: 0; font: inherit; color: #333; background: #fff; border: 1px solid #ccc; border-radius: 3px; }
        button.pri { background: #2f80e4; border-color: #2f80e4; color: #fff; }
      </style>`;
  }
  connectedCallback() {
    this.shadowRoot.innerHTML = `
      ${this.getStyles()}
      <div class="title"><span>${this.getAttribute('heading')}</span>
        <svg width="12" height="12"><path d="M.5.5l11 11M11.500.5l-11 11" stroke="#888" fill="none"/></svg>
      </div>
      <dlg-section>生成位置</dlg-section>
      <div class="opt" style="margin-top:4px"><div class="box on"><svg width="10" height="8"><path d="M1 4l3 3 5-6" stroke="#fff" stroke-width="1.800" fill="none"/></svg></div>主梁与次梁相交，主梁上</div>
      <div class="opt" style="margin-top:1px"><div class="box"></div>同截面的次梁相交，均设置</div>
      <dlg-section style="margin-top:3px">钢筋信息</dlg-section>
      <div class="field"><span>吊筋:</span><div class="input">2c12</div></div>
      <div class="field"><span>次梁加筋:</span><div class="input focus"><b>0</b></div></div>
      <dlg-section style="margin-top:4px">生成方式</dlg-section>
      <div class="radios">
        <div class="opt"><div class="radio on"></div>选择图元</div>
        <div class="opt"><div class="radio"></div>选择楼层</div>
      </div>
      <hr>
      <div class="btns"><button>查看说明</button><button class="pri">确定</button><button>取消</button></div>`;
  }
}

customElements.define('gtj-app', GtjApp);
customElements.define('gtj-titlebar', GtjTitlebar);
customElements.define('gtj-tabs', GtjTabs);
customElements.define('gtj-ribbon', GtjRibbon);
customElements.define('rb-group', RbGroup);
customElements.define('rb-item', RbItem);
customElements.define('rb-big', RbBig);
customElements.define('gtj-subbar', GtjSubbar);
customElements.define('gtj-floorpanel', GtjFloorpanel);
customElements.define('gtj-canvas', GtjCanvas);
customElements.define('gtj-viewbar', GtjViewbar);
customElements.define('gtj-props', GtjProps);
customElements.define('dlg-section', DlgSection);
customElements.define('gtj-dialog', GtjDialog);
</script>
</body>
</html>
